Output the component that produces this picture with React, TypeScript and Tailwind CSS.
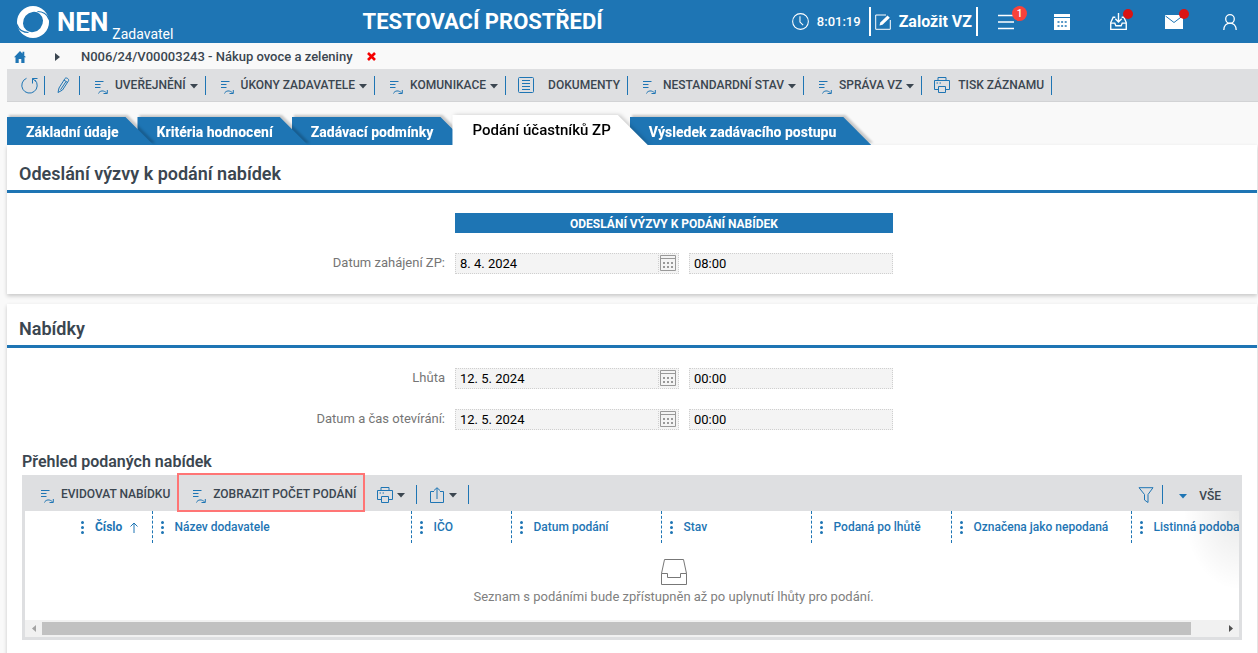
import React from "react";

const SvgIcon = ({ children, className = "size-4", box = "0 0 16 16" }: { children: React.ReactNode; className?: string; box?: string }) => (
  <svg viewBox={box} className={`shrink-0 ${className}`} fill="none" stroke="currentColor" strokeWidth="1" aria-hidden="true">
    {children}
  </svg>
);

const Logo = () => (
  <SvgIcon box="0 0 32 32" className="size-8">
    <circle cx="16" cy="16" r="16" fill="#fff" stroke="none" />
    <ellipse cx="16" cy="16" rx="9.600" ry="10.600" transform="rotate(40 16 16)" fill="#1e75b4" stroke="none" />
    <path d="M0 18.500C1.500 23 5.500 26.500 11.500 26.500" stroke="#1e75b4" strokeWidth="1.200" />
    <path d="M32 13.500C30.500 9 26.500 5.500 20.500 5.500" stroke="#1e75b4" strokeWidth="1.200" />
  </SvgIcon>
);

const FlowIcon = () => (
  <SvgIcon box="0 0 14 15" className="h-[15px] w-3.5 text-[#1e75b4]">
    <path d="M1 1.500H9.500M1 4.500H6.500M1 7.500H6.500" />
    <path d="M4.500 13.500C5.500 10.500 10 9.800 12.800 13.200M13.300 10V13.500H9.500" />
  </SvgIcon>
);

const PrinterIcon = () => (
  <SvgIcon className="size-4 text-[#1e75b4]">
    <path d="M4 3.500V.5H12V3.500M4 12.500H.5V3.500H15.500V12.500H12" />
    <path d="M4.500 9.500H11.500V15.500H4.500ZM2.500 6H4M5.500 6H7" />
  </SvgIcon>
);

const CalendarIcon = () => (
  <SvgIcon className="size-4 text-[#999]">
    <path d="M.5 .5H15.500V15.500H.5ZM.5 3.500H15.500" />
    <path d="M3 8H13M3 12H13" strokeWidth="2" strokeDasharray="2 2" />
  </SvgIcon>
);

const Caret = ({ className = "text-[#3b4650]" }: { className?: string }) => (
  <SvgIcon box="0 0 8 5" className={`h-[5px] w-2 ${className}`}>
    <path d="M0 0H8L4 4.500Z" fill="currentColor" stroke="none" />
  </SvgIcon>
);

const Sep = () => <span className="h-[19px] w-px shrink-0 bg-[#1e75b4]" />;

const MenuButton = ({ label }: { label: string }) => (
  <>
    <button className="flex shrink-0 items-center pr-[7px] pl-3.5">
      <span className="pt-1"><FlowIcon /></span>
      <span className="ml-[7px]">{label}</span>
      <span className="ml-1 pt-0.5"><Caret /></span>
    </button>
    <Sep />
  </>
);

const Header = () => (
  <header className="flex h-[43px] items-center bg-[#1e75b4] text-white">
    <div className="flex h-full items-center pl-[17px]">
      <Logo />
      <span className="ml-2 text-[26px] leading-8 font-bold">NEN</span>
      <span className="ml-1 self-end pb-px text-sm leading-4">Zadavatel</span>
    </div>
    <h1 className="flex-1 text-center text-[22px] font-bold">TESTOVACÍ PROSTŘEDÍ</h1>
    <div className="flex items-center gap-2 pr-2 text-[13px] font-medium">
      <SvgIcon className="size-[17px]">
        <circle cx="8" cy="8" r="7.400" />
        <path d="M7.500 3V8.500L10.500 11.500" />
      </SvgIcon>
      <time>8:01:19</time>
    </div>
    <button className="flex h-[29px] items-center gap-2 border-x-2 border-white px-1 text-base font-bold">
      <SvgIcon className="size-4">
        <path d="M11 1H.7V15.300H15.300V6" />
        <path d="M4.500 11.500L5.300 8.500L12.500 1.500L14.800 3.800L7.500 10.800Z" fill="currentColor" stroke="none" />
      </SvgIcon>
      Založit VZ
    </button>
    <nav className="flex h-full">
      <a href="#menu" aria-label="Menu" className="relative grid w-14 place-items-center">
        <SvgIcon className="size-4">
          <path d="M0 1.500H16M0 8H16M0 14.500H16" strokeWidth="1.500" />
        </SvgIcon>
        <span className="absolute top-1.5 right-[7px] grid size-[15px] place-items-center rounded-full bg-[#f8423a] text-[10px] font-medium">1</span>
      </a>
      <a href="#calendar" aria-label="Kalendář" className="grid w-14 place-items-center">
        <SvgIcon className="size-4">
          <path d="M0 0H16V3H0ZM0 4H16V16H0Z" fill="currentColor" stroke="none" />
          <path d="M3.500 8H13M3.500 12H13" stroke="#1e75b4" strokeWidth="1.500" strokeDasharray="2 1.600" />
        </SvgIcon>
      </a>
      <a href="#inbox" aria-label="Doručené" className="relative grid w-14 place-items-center">
        <SvgIcon className="size-[17px]">
          <path d="M5 4H3L.7 9V15.400H15.300V9L13 4H11M.7 9.500H4.500L5.500 12H10.500L11.500 9.500H15.300" strokeWidth="1.300" />
          <path d="M8 0V8M5 5.500L8 8.500L11 5.500" strokeWidth="1.300" />
        </SvgIcon>
        <span className="absolute top-[9px] right-[13px] size-2.5 rounded-full bg-[#d91414]" />
      </a>
      <a href="#messages" aria-label="Zprávy" className="relative grid w-14 place-items-center">
        <SvgIcon box="0 0 18 14" className="h-3.5 w-[18px]">
          <path d="M0 0H18V14H0Z" fill="currentColor" stroke="none" />
          <path d="M.5 1L9 7.500L17.500 1" stroke="#1e75b4" />
        </SvgIcon>
        <span className="absolute top-[9px] right-[13px] size-2.5 rounded-full bg-[#d91414]" />
      </a>
      <a href="#user" aria-label="Uživatel" className="grid w-14 place-items-center">
        <SvgIcon className="size-4">
          <circle cx="8" cy="5" r="4.300" strokeWidth="1.300" />
          <path d="M1.800 16C1.800 11.500 4.500 9.200 8 9.200S14.200 11.500 14.200 16" strokeWidth="1.300" />
        </SvgIcon>
      </a>
    </nav>
  </header>
);

const Breadcrumb = () => (
  <nav className="flex h-[26px] items-center pt-px text-[13px] font-medium text-[#3b4650]">
    <a href="#home" aria-label="Domů" className="ml-[7px]">
      <SvgIcon box="0 0 12 12" className="size-3 text-[#1e75b4]">
        <path d="M6 0L12 6.300H10.500V12H7.300V8H4.700V12H1.500V6.300H0ZM8.500 .8H10.300V4H8.500Z" fill="currentColor" stroke="none" />
      </SvgIcon>
    </a>
    <SvgIcon box="0 0 5 8" className="ml-[29px] h-2 w-[5px]">
      <path d="M0 0L5 4L0 8Z" fill="currentColor" stroke="none" />
    </SvgIcon>
    <a href="#record" className="ml-[21px]">N006/24/V00003243 - Nákup ovoce a zeleniny</a>
    <button aria-label="Zavřít" className="ml-3.5">
      <SvgIcon box="0 0 9 9" className="size-[9px] text-[#f50000]">
        <path d="M1 1L8 8M8 1L1 8" strokeWidth="2.600" />
      </SvgIcon>
    </button>
  </nav>
);

const Toolbar = () => (
  <div className="flex h-[33px] items-center overflow-hidden border-b border-[#d2d3d5] bg-[#dedfe1] text-xs font-medium text-[#3b4650]">
    <button aria-label="Obnovit" className="pr-1.5 pl-3.5">
      <SvgIcon box="0 0 17 17" className="size-[17px] text-[#1e75b4]">
        <path d="M5.500 1.300A7.700 7.700 0 1 0 14 3M16.500 1.500H11.500V6.500M11.500 1.500L15 4.500" />
      </SvgIcon>
    </button>
    <Sep />
    <button aria-label="Upravit" className="pr-2 pl-2.5">
      <SvgIcon className="size-4 text-[#1e75b4]">
        <path d="M3 15.500L4 11L10 1.500C11 0 14.500 2 13.500 3.800L7.500 13L3 15.500ZM9 3L12.500 5.500M11 4.500L5.500 12.800" />
      </SvgIcon>
    </button>
    <Sep />
    <MenuButton label="UVEŘEJNĚNÍ" />
    <MenuButton label="ÚKONY ZADAVATELE" />
    <MenuButton label="KOMUNIKACE" />
    <button className="flex shrink-0 items-center gap-3.5 pr-[7px] pl-3">
      <SvgIcon className="size-4 text-[#1e75b4]">
        <rect x=".5" y=".5" width="15" height="15" rx="1" />
        <path d="M4 3.500H12M4 6.500H12M4 9.500H12M4 12.500H12" />
      </SvgIcon>
      DOKUMENTY
    </button>
    <Sep />
    <MenuButton label="NESTANDARDNÍ STAV" />
    <MenuButton label="SPRÁVA VZ" />
    <button className="flex shrink-0 items-center gap-2 pr-[7px] pl-3">
      <PrinterIcon />
      TISK ZÁZNAMU
    </button>
    <Sep />
  </div>
);

const tabShape = "[clip-path:polygon(0_0,calc(100%-28px)_0,100%_100%,0_100%)]";

const Tab = ({ label, layer }: { label: string; layer: string }) => (
  <a href={`#${label}`} className={`relative -mr-4 drop-shadow-[2px_-2px_1px_rgba(0,0,0,0.2)] ${layer}`}>
    <span className={`flex h-7 items-center bg-[#1e75b4] pt-0.5 pr-[35px] pl-[19px] text-sm font-extrabold whitespace-nowrap text-white ${tabShape}`}>
      {label}
    </span>
  </a>
);

const Tabs = () => (
  <nav className="flex h-[43px] items-end overflow-hidden">
    <Tab label="Základní údaje" layer="z-30" />
    <Tab label="Kritéria hodnocení" layer="z-20" />
    <Tab label="Zadávací podmínky" layer="z-10" />
    <a href="#podani" aria-current="page" className="relative z-40 -mr-[18px] drop-shadow-[2px_0px_2px_rgba(0,0,0,0.2)]">
      <span className="flex h-[30px] items-center bg-white pr-[37px] pl-5 text-[15px] font-medium whitespace-nowrap text-black [clip-path:polygon(0_0,calc(100%-30px)_0,100%_100%,0_100%)]">
        Podání účastníků ZP
      </span>
    </a>
    <Tab label="Výsledek zadávacího postupu" layer="z-10" />
  </nav>
);

const SectionTitle = ({ children }: { children: React.ReactNode }) => (
  <h2 className="flex h-11 items-center border-b-3 border-[#1e75b4] pt-2 pl-3 text-lg font-semibold text-[#3b4650]">{children}</h2>
);

const field = "h-[21px] min-w-0 border border-dotted border-[#cfcfcf] bg-[#f4f4f4] px-1 text-[13px] text-black";

const DateRow = ({ id, label, date, time }: { id: string; label: string; date: string; time: string }) => (
  <div className="flex h-[21px] items-center">
    <label htmlFor={id} className="w-[438px] pb-0.5 text-right text-[13px] text-[#757575]">{label}</label>
    <div className="ml-2.5 flex w-56">
      <input id={id} readOnly defaultValue={date} className={`flex-1 ${field}`} />
      <button aria-label="Vybrat datum" className="-ml-px flex h-[21px] items-center border border-dotted border-[#cfcfcf] bg-[#f4f4f4] pr-0.5 pb-0.5 pl-px">
        <CalendarIcon />
      </button>
    </div>
    <input aria-label={`${label} čas`} readOnly defaultValue={time} className={`ml-2.5 w-51 ${field}`} />
  </div>
);

const columns = [
  { label: "Název dodavatele", width: "w-[259px]" },
  { label: "IČO", width: "w-[100px]" },
  { label: "Datum podání", width: "w-[150px]" },
  { label: "Stav", width: "w-[150px]" },
  { label: "Podaná po lhůtě", width: "w-[140px]" },
  { label: "Označena jako nepodaná", width: "w-[180px]" },
  { label: "Listinná podoba", width: "w-[191px]" },
];

const Dots = () => (
  <SvgIcon box="0 0 3 13" className="h-[13px] w-[3px]">
    <path d="M1.500 0A1.500 1.500 0 0 1 1.500 3A1.500 1.500 0 0 1 1.500 0ZM1.500 5A1.500 1.500 0 0 1 1.500 8A1.500 1.500 0 0 1 1.500 5ZM1.500 10A1.500 1.500 0 0 1 1.500 13A1.500 1.500 0 0 1 1.500 10Z" fill="currentColor" stroke="none" />
  </SvgIcon>
);

const BidsTable = () => (
  <div className="mx-[15px] border-3 border-t-0 border-[#dedfe1]">
    <div className="-mx-[3px] flex h-9 items-center bg-[#dedfe1] pl-1 text-xs font-medium text-[#3b4650]">
      <button className="flex items-center pr-2 pl-3.5">
        <span className="pt-1.5"><FlowIcon /></span>
        <span className="ml-[7px] pt-0.5">EVIDOVAT NABÍDKU</span>
      </button>
      <button className="relative flex h-full items-center pr-2 pl-3.5">
        <span className="pt-1.5"><FlowIcon /></span>
        <span className="ml-[7px] pt-0.5">ZOBRAZIT POČET PODÁNÍ</span>
        <span className="absolute -inset-x-px -top-0.5 -bottom-px border-2 border-[#ff7575]" />
      </button>
      <button aria-label="Tisk" className="flex items-center gap-1 pt-1 pr-[11px] pl-[13px]">
        <PrinterIcon />
        <Caret />
      </button>
      <span className="pt-0.5"><span className="block h-[19px] w-px bg-[#1e75b4]" /></span>
      <button aria-label="Export" className="flex items-center gap-1 pt-1 pr-[11px] pl-3">
        <SvgIcon className="size-4 text-[#1e75b4]">
          <path d="M5 4.500H1.500V15.500H14.500V4.500H11M8 12V1M5 3.500L8 .7L11 3.500" />
        </SvgIcon>
        <Caret />
      </button>
      <span className="pt-0.5"><span className="block h-[19px] w-px bg-[#1e75b4]" /></span>
      <button aria-label="Filtr" className="ml-auto pt-1 pr-2">
        <SvgIcon className="size-4 text-[#1e75b4]">
          <path d="M1 .7H15L10 7.500V15.500L6.500 13V7.500Z" />
        </SvgIcon>
      </button>
      <span className="pt-0.5"><span className="block h-[19px] w-px bg-[#1e75b4]" /></span>
      <button className="flex items-center gap-3 pt-1.5 pr-[21px] pl-4">
        <Caret className="text-[#1e75b4]" />
        VŠE
      </button>
    </div>
    <div className="relative overflow-hidden">
      <table className="w-[1297px] table-fixed border-collapse">
        <thead className="h-8 text-xs text-[#1e75b4]">
          <tr>
            <th className="w-[47px]" />
            <th className="w-20 p-0 font-bold">
              <button className="flex items-center pl-[9px]">
                <Dots />
                <span className="ml-[11px]">Číslo</span>
                <SvgIcon box="0 0 8 11" className="ml-2 h-[11px] w-2">
                  <path d="M4 11V1M.5 4.500L4 1L7.500 4.500" />
                </SvgIcon>
              </button>
            </th>
            {columns.map((c) => (
              <th key={c.label} className={`border-l border-dashed border-[#1e75b4] p-0 font-medium ${c.width}`}>
                <button className="flex items-center gap-[11px] pl-2 whitespace-nowrap">
                  <Dots />
                  {c.label}
                </button>
              </th>
            ))}
          </tr>
        </thead>
        <tbody>
          <tr>
            <td colSpan={9} className="h-[77px] p-0 pt-0.5 text-center text-[13px] text-[#808080]">
              <SvgIcon box="0 0 26 26" className="mx-auto mb-0.5 size-[26px] text-[#777]">
                <path d="M3.500 .5H22.500L25.500 14.500V25.500H.5V14.500ZM.5 14.500H6.500V18.500H19.500V14.500H25.500" />
              </SvgIcon>
              Seznam s podáními bude zpřístupněn až po uplynutí lhůty pro podání.
            </td>
          </tr>
        </tbody>
      </table>
      <div className="pointer-events-none absolute top-0 right-0 h-20 w-14 bg-[radial-gradient(ellipse_at_top_right,rgba(0,0,0,0.09),transparent_70%)]" />
    </div>
    <div className="flex h-[17px] items-center bg-[#f1f1f1]">
      <span className="grid w-[17px] place-items-center text-[#a3a3a3]">
        <SvgIcon box="0 0 4 7" className="h-[7px] w-1"><path d="M4 0V7L0 3.500Z" fill="currentColor" stroke="none" /></SvgIcon>
      </span>
      <div className="h-[13px] flex-1 pr-[31px]"><div className="h-full bg-[#c1c1c1]" /></div>
      <span className="grid w-[17px] place-items-center text-[#505050]">
        <SvgIcon box="0 0 4 7" className="h-[7px] w-1"><path d="M0 0V7L4 3.500Z" fill="currentColor" stroke="none" /></SvgIcon>
      </span>
    </div>
  </div>
);

export default function App() {
  return (
    <div className="min-h-screen overflow-hidden bg-[#f9f9f9] font-[Roboto,sans-serif]">
      <Header />
      <div className="pl-[7px]">
        <Breadcrumb />
        <Toolbar />
        <Tabs />
        <main>
          <section className="mr-px bg-white pt-1 pb-5 shadow-[0_2px_4px_rgba(0,0,0,0.2)]">
            <SectionTitle>Odeslání výzvy k podání nabídek</SectionTitle>
            <div className="pt-5">
              <button className="mb-5 ml-112 block h-5 w-[438px] bg-[#1e75b4] pt-px text-xs font-bold text-white">
                ODESLÁNÍ VÝZVY K PODÁNÍ NABÍDEK
              </button>
              <DateRow id="start" label="Datum zahájení ZP:" date="8. 4. 2024" time="08:00" />
            </div>
          </section>
          <section className="mt-2.5 mr-px bg-white pb-5 shadow-[0_2px_4px_rgba(0,0,0,0.2)]">
            <SectionTitle>Nabídky</SectionTitle>
            <div className="flex flex-col gap-5 py-5">
              <DateRow id="deadline" label="Lhůta" date="12. 5. 2024" time="00:00" />
              <DateRow id="opening" label="Datum a čas otevírání:" date="12. 5. 2024" time="00:00" />
            </div>
            <h3 className="mb-[3px] pt-0.5 pl-[15px] text-base leading-5 font-semibold text-[#3b4650]">Přehled podaných nabídek</h3>
            <BidsTable />
          </section>
        </main>
      </div>
    </div>
  );
}
